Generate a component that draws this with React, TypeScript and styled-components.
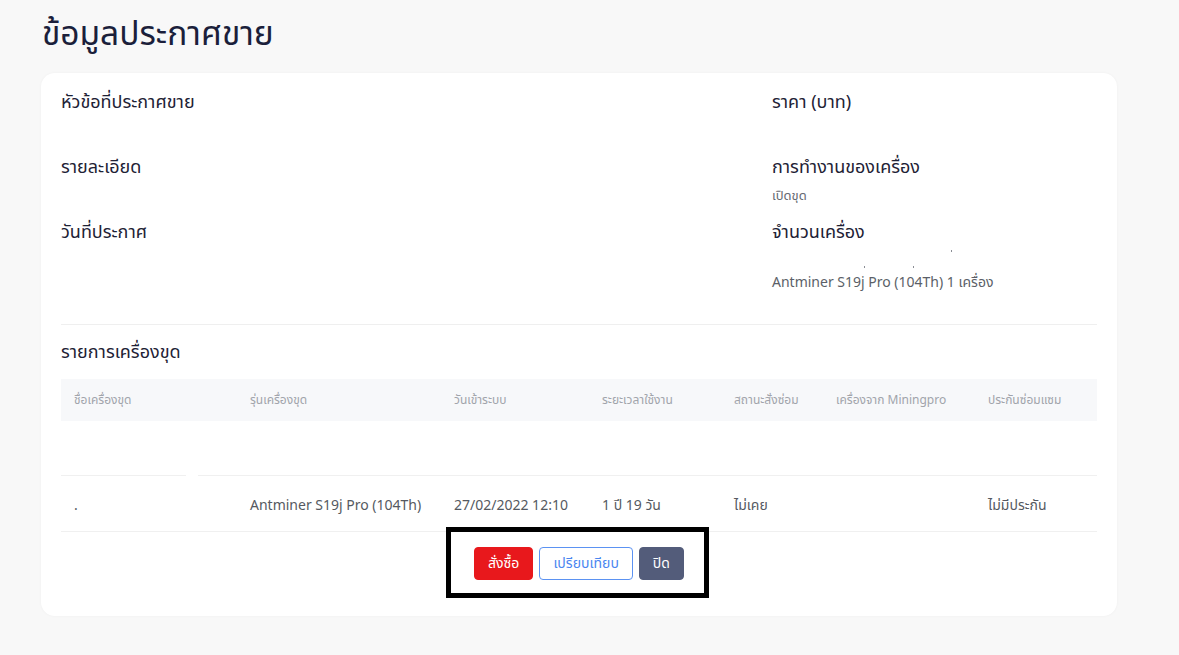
import React from 'react';
import styled, { createGlobalStyle } from 'styled-components';

const GlobalStyle = createGlobalStyle`
    body {
        margin: 0;
        background: #f8f8f8;
        font-family: "Noto Sans Thai", "Noto Sans", "Liberation Sans", sans-serif;
        color: #1e2235;
    }
`;

const columns = [
    { title: 'ชื่อเครื่องขุด', width: 176 },
    { title: 'รุ่นเครื่องขุด', width: 204 },
    { title: 'วันเข้าระบบ', width: 148 },
    { title: 'ระยะเวลาใช้งาน', width: 132 },
    { title: 'สถานะสั่งซ่อม', width: 102 },
    { title: 'เครื่องจาก Miningpro', width: 152 },
    { title: 'ประกันซ่อมแซม', width: 122 },
];

const row = ['.', 'Antminer S19j Pro (104Th)', '27/02/2022 12:10', '1 ปี 19 วัน', 'ไม่เคย', '', 'ไม่มีประกัน'];

const gridColumns = columns.map((c) => `${c.width}px`).join(' ');

export default function App() {
    return (
        <Page>
            <GlobalStyle />
            <PageTitle>ข้อมูลประกาศขาย</PageTitle>
            <Card>
                <InfoGrid>
                    <Column>
                        <Field><Label>หัวข้อที่ประกาศขาย</Label></Field>
                        <Field><Label>รายละเอียด</Label></Field>
                        <Field><Label>วันที่ประกาศ</Label></Field>
                    </Column>
                    <Column>
                        <Field><Label>ราคา (บาท)</Label></Field>
                        <Field>
                            <Label>การทำงานของเครื่อง</Label>
                            <Value>เปิดขุด</Value>
                        </Field>
                        <Field>
                            <Label>จำนวนเครื่อง</Label>
                            <Specks>
                                <Speck $left={179} />
                            </Specks>
                            <Specks $bottom>
                                <Speck $left={92} />
                                <Speck $left={48} />
                            </Specks>
                            <MachineValue>Antminer S19j Pro (104Th) 1 เครื่อง</MachineValue>
                        </Field>
                    </Column>
                </InfoGrid>

                <Divider />

                <SectionTitle>รายการเครื่องขุด</SectionTitle>
                <Table>
                    <HeadRow>
                        {columns.map((c) => (
                            <HeadCell key={c.title}>{c.title}</HeadCell>
                        ))}
                    </HeadRow>
                    <EmptyRow>
                        <EmptyCell $broken />
                        {columns.slice(1).map((c) => (
                            <EmptyCell key={c.title} />
                        ))}
                    </EmptyRow>
                    <BodyRow>
                        {row.map((v, i) => (
                            <BodyCell key={i}>{v}</BodyCell>
                        ))}
                    </BodyRow>
                </Table>

                <Actions>
                    <ButtonGroup>
                        <Button $variant="danger">สั่งซื้อ</Button>
                        <Button $variant="outline">เปรียบเทียบ</Button>
                        <Button $variant="dark">ปิด</Button>
                        <Highlight />
                    </ButtonGroup>
                </Actions>
            </Card>
        </Page>
    );
}

const Page = styled.div`
    padding: 10px 0 38px 41px;
`;

const PageTitle = styled.h1`
    margin: 0 0 14px 1px;
    font-size: 33.5px;
    font-weight: 400;
    line-height: 49px;
    color: #1b1f3b;
`;

const Card = styled.div`
    width: 1036px;
    background: #fff;
    border-radius: 14px;
    box-shadow: 0 0 3px rgba(0, 0, 0, 0.04);
    padding: 17px 20px 36px;
`;

const InfoGrid = styled.div`
    display: grid;
    grid-template-columns: 711px 1fr;
`;

const Column = styled.div`
    display: flex;
    flex-direction: column;
`;

const Field = styled.div`
    min-height: 65px;
    display: flex;
    flex-direction: column;
`;

const Label = styled.div`
    font-size: 18px;
    line-height: 26px;
`;

const Value = styled.div`
    margin-top: 5px;
    font-size: 13px;
    line-height: 20px;
    color: #666a73;
`;

const Specks = styled.div<{ $bottom?: boolean }>`
    height: 12px;
    display: flex;
    align-items: ${(p) => (p.$bottom ? 'flex-end' : 'center')};
`;

const Speck = styled.span<{ $left: number }>`
    width: 1px;
    height: 2px;
    margin: 0 0 2px ${(p) => p.$left}px;
    background: #8a8d95;
`;

const MachineValue = styled.div`
    margin-top: 3px;
    font-size: 14px;
    line-height: 20px;
    color: #5b5f68;
`;

const Divider = styled.div`
    height: 1px;
    background: #efefef;
    margin-top: 31px;
`;

const SectionTitle = styled.div`
    font-size: 18px;
    line-height: 26px;
    margin-top: 15px;
`;

const Table = styled.div`
    margin-top: 13px;
`;

const HeadRow = styled.div`
    display: grid;
    grid-template-columns: ${gridColumns};
    height: 42px;
    align-items: center;
    background: #f7f8fa;
`;

const HeadCell = styled.div`
    padding-left: 13px;
    font-size: 12px;
    color: #a1a4ab;
    white-space: nowrap;
`;

const EmptyRow = styled.div`
    display: grid;
    grid-template-columns: ${gridColumns};
    height: 55px;
`;

const EmptyCell = styled.div<{ $broken?: boolean }>`
    ${(p) =>
        p.$broken
            ? 'background: linear-gradient(to right, #f0f0f0 125px, transparent 125px, transparent 137px, #f0f0f0 137px) left bottom / 100% 1px no-repeat;'
            : 'border-bottom: 1px solid #f0f0f0;'}
`;

const BodyRow = styled.div`
    display: grid;
    grid-template-columns: ${gridColumns};
    height: 55px;
    align-items: center;
    border-bottom: 1px solid #f0f0f0;
`;

const BodyCell = styled.div`
    padding-left: 13px;
    padding-top: 3px;
    font-size: 14px;
    color: #555961;
    white-space: nowrap;
`;

const Actions = styled.div`
    display: flex;
    justify-content: center;
    margin-top: 15px;
`;

const ButtonGroup = styled.div`
    position: relative;
    display: flex;
    gap: 6px;
`;

const variants = {
    danger: 'background: #e8181c; color: #fff; border-color: #e8181c;',
    outline: 'background: #fff; color: #4a86f0; border-color: #5b92f2;',
    dark: 'background: #535c7a; color: #fff; border-color: #535c7a;',
};

const Button = styled.button<{ $variant: keyof typeof variants }>`
    height: 33px;
    padding: 0 13px;
    border: 1px solid;
    border-radius: 4px;
    font-family: inherit;
    font-size: 14px;
    cursor: pointer;
    ${(p) => variants[p.$variant]}
`;

const Highlight = styled.div`
    position: absolute;
    left: -28px;
    right: -25px;
    top: -20px;
    bottom: -18px;
    border: 5px solid #000;
    pointer-events: none;
`;
